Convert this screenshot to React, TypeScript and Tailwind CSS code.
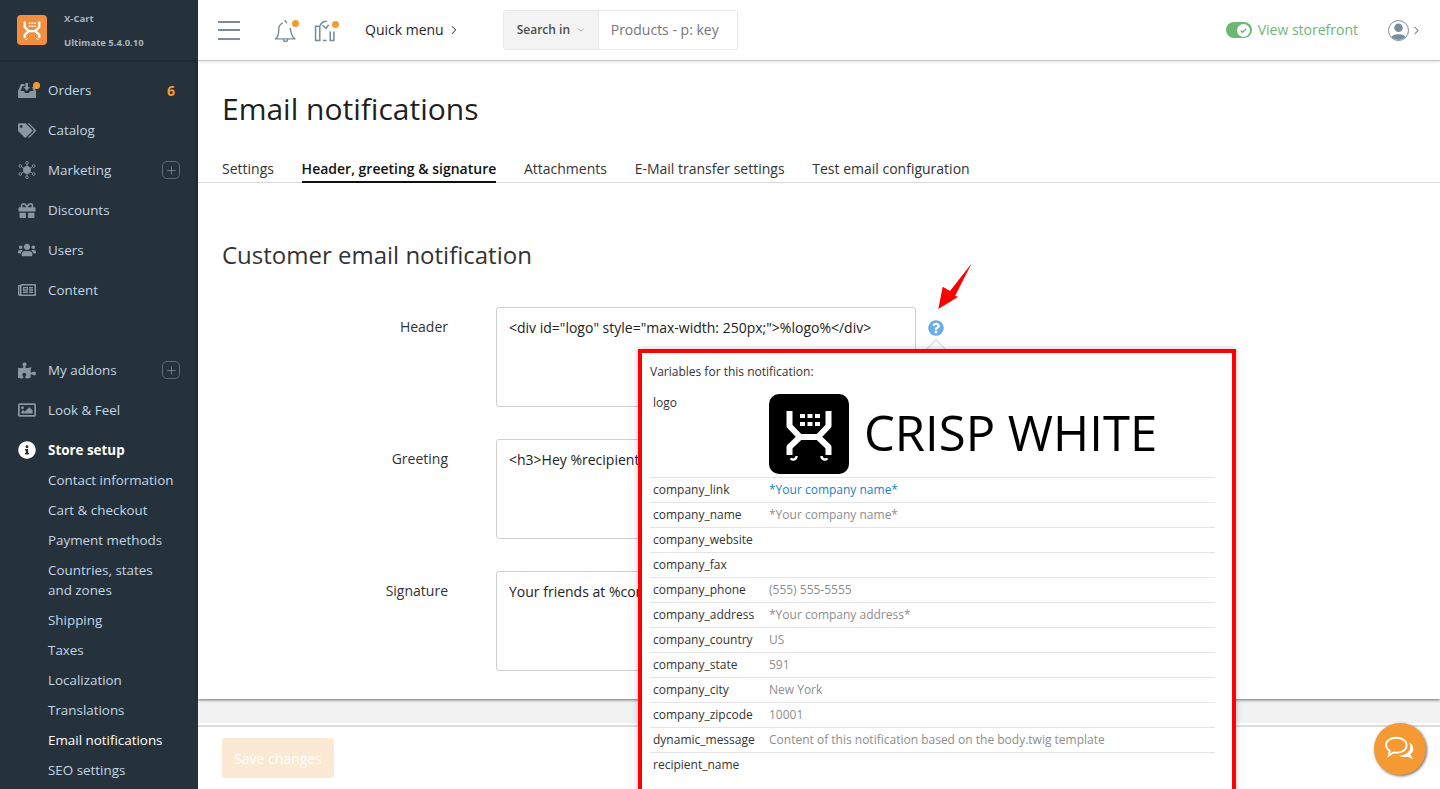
import { ChevronRight, ChevronDown, Plus } from "lucide-react"
import { FaTags, FaGift, FaUsers, FaRegNewspaper, FaPuzzlePiece, FaRegImage, FaInfoCircle, FaQuestionCircle } from "react-icons/fa"

// same cart mark for the sidebar badge and the big "crisp white" logo
function CartMark({ className }: { className?: string }) {
  return (
    <svg viewBox="0 0 80 80" className={className} fill="none" stroke="currentColor" strokeWidth="6">
      <path d="M20.500 17V32L31 43H49L59.500 32V17" strokeLinejoin="round" />
      <path d="M31 43L20.500 53V61M49 43L59.500 53V61" strokeLinejoin="round" />
      <path d="M27.500 62a3.500 3.500 0 0 1-6 2.500M52.500 62a3.500 3.500 0 0 0 6 2.500" strokeWidth="2.500" />
      <path
        d="M31 20h5v4h-5zM38.500 20h5v4h-5zM46 20h5v4h-5zM31 28h5v4h-5zM38.500 28h5v4h-5zM46 28h5v4h-5z"
        fill="currentColor"
        stroke="none"
      />
    </svg>
  )
}

function OrdersIcon() {
  return (
    <svg viewBox="0 0 18 16" className="h-4 w-[18px]" fill="#8b979f">
      <path d="M0 16V9L3 2h3.500v2H4.500L2.500 9H6l1 2h4l1-2h3.500L14 5h2l2 4v7z" />
      <path d="M7.500 1H10v4h2L8.800 9 5.600 5h1.900z" />
    </svg>
  )
}

function HubIcon() {
  return (
    <svg viewBox="0 0 20 20" className="h-[18px] w-[18px]" fill="none" stroke="#8b979f" strokeWidth="1">
      <circle cx="10" cy="10" r="4" fill="#8b979f" />
      <path d="M10 6V3M10 14v3M6.500 8L4 6.500M13.500 8L16 6.500M6.500 12L4 13.500M13.500 12L16 13.500" />
      <circle cx="10" cy="2" r="1.500" />
      <circle cx="10" cy="18" r="1.500" />
      <circle cx="2.500" cy="5.500" r="1.500" />
      <circle cx="17.500" cy="5.500" r="1.500" />
      <circle cx="2.500" cy="14.500" r="1.500" />
      <circle cx="17.500" cy="14.500" r="1.500" />
    </svg>
  )
}

const menu = [
  { label: "Orders", icon: <OrdersIcon />, dot: true, count: "6" },
  { label: "Catalog", icon: <FaTags className="h-[17px] w-[18px] text-[#8b979f]" /> },
  { label: "Marketing", icon: <HubIcon />, plus: true },
  { label: "Discounts", icon: <FaGift className="h-[17px] w-[18px] text-[#8b979f]" /> },
  { label: "Users", icon: <FaUsers className="h-[18px] w-[18px] text-[#8b979f]" /> },
  { label: "Content", icon: <FaRegNewspaper className="h-[18px] w-[18px] text-[#8b979f]" /> },
]

const menu2 = [
  { label: "My addons", icon: <FaPuzzlePiece className="h-[17px] w-[18px] text-[#8b979f]" />, plus: true },
  { label: "Look & Feel", icon: <FaRegImage className="h-[18px] w-[18px] text-[#8b979f]" /> },
]

const subItems = [
  "Contact information",
  "Cart & checkout",
  "Payment methods",
  "Countries, states and zones",
  "Shipping",
  "Taxes",
  "Localization",
  "Translations",
  "Email notifications",
  "SEO settings",
]

const tabs = ["Settings", "Header, greeting & signature", "Attachments", "E-Mail transfer settings", "Test email configuration"]

const fields = [
  { label: "Header", value: '<div id="logo" style="max-width: 250px;">%logo%</div>' },
  { label: "Greeting", value: "<h3>Hey %recipient_name%!</h3>" },
  { label: "Signature", value: "Your friends at %company_name%" },
]

const variables = [
  ["company_link", "*Your company name*"],
  ["company_name", "*Your company name*"],
  ["company_website", ""],
  ["company_fax", ""],
  ["company_phone", "(555) 555-5555"],
  ["company_address", "*Your company address*"],
  ["company_country", "US"],
  ["company_state", "591"],
  ["company_city", "New York"],
  ["company_zipcode", "10001"],
  ["dynamic_message", "Content of this notification based on the body.twig template"],
  ["recipient_name", ""],
]

function MenuRow({ item }: { item: { label: string; icon: React.ReactNode; dot?: boolean; count?: string; plus?: boolean } }) {
  return (
    <div className="flex h-10 items-center px-[18px] text-[13.400px] text-[#c3d5e6]">
      <span className="relative flex w-[30px] items-center">
        {item.icon}
        {item.dot && <span className="absolute left-[15px] top-0 h-[7px] w-[7px] rounded-full bg-[#f59a33]" />}
      </span>
      <span className="flex-1">{item.label}</span>
      {item.count && <span className="mr-[5px] text-[14px] font-bold text-[#f59a33]">{item.count}</span>}
      {item.plus && (
        <span className="flex h-[18px] w-[18px] items-center justify-center rounded-[5px] border border-[#5d6a73]">
          <Plus className="h-[13px] w-[13px] text-[#77838c]" strokeWidth={1.600} />
        </span>
      )}
    </div>
  )
}

function Sidebar() {
  return (
    <aside className="flex h-full w-[198px] shrink-0 flex-col bg-[#25323b]">
      <div className="flex h-[60px] shrink-0 items-center pl-[17px] shadow-[0_1px_3px_rgba(0,0,0,0.35)]">
        <div className="flex h-[30px] w-[30px] items-center justify-center rounded-[4px] bg-[#ef8f3f] text-white">
          <CartMark className="h-[30px] w-[30px]" />
        </div>
        <div className="ml-[17px] flex flex-col gap-[9px] text-[9.500px] font-bold leading-[15px] text-[#aab4bb]">
          <span>X-Cart</span>
          <span>Ultimate 5.4.0.10</span>
        </div>
      </div>
      <nav className="pt-[10px]">
        {menu.map((item) => (
          <MenuRow key={item.label} item={item} />
        ))}
      </nav>
      <nav className="pt-[40px]">
        {menu2.map((item) => (
          <MenuRow key={item.label} item={item} />
        ))}
        <div className="flex h-10 items-center pl-[18px] text-[13.400px] font-bold text-white">
          <span className="w-[30px]">
            <FaInfoCircle className="h-[18px] w-[18px]" />
          </span>
          Store setup
        </div>
      </nav>
      <div className="-mt-[5px] pl-[48px] pr-[20px] text-[13.400px] leading-5 text-[#c3d5e6]">
        {subItems.map((s) => (
          <div key={s} className={s === "Email notifications" ? "py-[5px] text-white" : "py-[5px]"}>
            {s}
          </div>
        ))}
      </div>
    </aside>
  )
}

function TopBar() {
  return (
    <header className="relative z-10 flex h-[61px] shrink-0 items-center border-b border-[#c4c4c4] bg-white pl-5 shadow-[0_1px_3px_rgba(0,0,0,0.12)]">
      <div className="flex w-[22px] flex-col gap-[6.500px]">
        <span className="h-[2px] bg-[#7a8d99]" />
        <span className="h-[2px] bg-[#7a8d99]" />
        <span className="h-[2px] bg-[#7a8d99]" />
      </div>
      <span className="relative ml-[34px] flex">
        <svg viewBox="0 0 22 22" className="h-[23px] w-[23px]" fill="none" stroke="#7a8d99" strokeWidth="1.400">
          <path d="M1.500 19c2.500-2 3-4 3-8.500 0-3 1.500-5.500 3.500-6.500M15.500 9c1 4 1 7.500 4.500 10M1.500 19h18.500M9 19.500a2 2 0 0 0 4 0" strokeLinecap="round" />
          <path d="M10.500 1.500l1.500 2" strokeLinecap="round" />
        </svg>
        <span className="absolute right-[-2px] top-[1px] h-[7px] w-[7px] rounded-full bg-[#f59a33]" />
      </span>
      <span className="relative ml-[17px] flex">
        <svg viewBox="0 0 22 22" className="h-[23px] w-[23px]" fill="none" stroke="#7a8d99" strokeWidth="1.500">
          <path d="M1.500 7h4v13.500h-4zM19 12v8.500h-3.500V12M8.500 20.500h3.500M5.500 7C7 3 10 1.500 12.500 2.500M8 6l3.500 3L14 5.500" />
        </svg>
        <span className="absolute right-[-2px] top-[2px] h-[7px] w-[7px] rounded-full bg-[#f59a33]" />
      </span>
      <span className="ml-[28px] -mt-[1px] flex items-center text-[14px] text-[#1f1f1f]">
        Quick menu
        <ChevronRight className="ml-[3px] h-[14px] w-[14px]" strokeWidth={1.700} />
      </span>
      <div className="ml-[42px] flex h-10 w-[235px] overflow-hidden rounded-[3px] border border-[#e8e8e8] text-[14px]">
        <span className="flex w-[95px] items-center gap-[6px] border-r border-[#e8e8e8] bg-[#f3f3f3] pl-[13px] text-[12px] font-semibold text-[#4d4d4d]">
          Search in
          <ChevronDown className="h-[10px] w-[10px] text-[#9a9a9a]" />
        </span>
        <span className="flex flex-1 items-center pb-[1px] pl-[12px] text-[#767676]">Products - p: key</span>
      </div>
      <div className="ml-auto flex items-center pr-[17px]">
        <span className="flex h-[16px] w-[26px] items-center justify-end rounded-full bg-[#6cb872] pr-[1.500px]">
          <span className="flex h-[13px] w-[13px] items-center justify-center rounded-full bg-white">
            <svg viewBox="0 0 10 10" className="h-[9px] w-[9px]" fill="none" stroke="#6cb872" strokeWidth="1.500">
              <path d="M2 5l2 2 4-4" />
            </svg>
          </span>
        </span>
        <span className="ml-[6px] -mt-[1px] text-[14px] text-[#6cb872]">View storefront</span>
        <span className="ml-[30px] flex h-[21px] w-[21px] items-end justify-center overflow-hidden rounded-full border border-[#7a8d99]">
          <svg viewBox="0 0 20 20" className="h-[19px] w-[19px]" fill="#7a8d99">
            <circle cx="10" cy="7" r="4.500" />
            <path d="M2 20c0-5 4-6 8-6s8 1 8 6z" />
          </svg>
        </span>
        <ChevronRight className="ml-[1px] h-[13px] w-[13px] text-[#444]" strokeWidth={1.700} />
      </div>
    </header>
  )
}

function VariablesPopover() {
  return (
    <div className="absolute left-[440px] top-[288px] z-20 h-[460px] w-[598px] border-[4px] border-[#ff0000] bg-white pl-[8px] pr-[17px] pt-[11px] text-[12px] shadow-[0_0_6px_rgba(0,0,0,0.25)]">
      <div className="leading-[16px] text-[#333]">Variables for this notification:</div>
      <div className="mt-[7px] flex h-[91px] border-b border-[#e4e4e4] pl-[3px]">
        <span className="w-[116px] pt-[8px] leading-[16px] text-[#333]">logo</span>
        <div className="mt-[7px] flex h-[80px] items-center">
          <span className="flex h-[80px] w-[80px] items-center justify-center rounded-[10px] bg-black text-white">
            <CartMark className="h-[80px] w-[80px]" />
          </span>
          <span className="-mt-[3px] ml-[15px] text-[49px] leading-none whitespace-nowrap text-black">CRISP WHITE</span>
        </div>
      </div>
      {variables.map(([name, value]) => (
        <div key={name} className="flex h-[25px] items-center border-b border-[#e4e4e4] pl-[3px] last:border-b-transparent">
          <span className="w-[116px] text-[#333]">{name}</span>
          <span className={name === "company_link" ? "text-[#1c7fc4]" : "text-[#8e8e8e]"}>{value}</span>
        </div>
      ))}
    </div>
  )
}

function HelpMarker() {
  return (
    <>
      <svg viewBox="0 0 38 50" className="absolute left-[738px] top-[201px] z-20 h-[50px] w-[38px]" fill="#ff0000">
        <path d="M2.300 47L6.700 24.700 14 29 35.700 1.300 19 34l3.300.700z" />
      </svg>
      <FaQuestionCircle className="absolute left-[730px] top-[259px] z-20 h-[16px] w-[16px] text-[#6aaee6]" />
      <span className="absolute left-[731px] top-[281px] z-10 h-[14px] w-[14px] rotate-45 border-l border-t border-[#d9d9d9] bg-white" />
    </>
  )
}

export default function App() {
  return (
    <div className="flex h-[789px] w-full overflow-hidden bg-white font-['Open_Sans',sans-serif]">
      <Sidebar />
      <div className="flex h-full min-w-0 flex-1 flex-col">
        <TopBar />
        <main className="relative flex flex-1 flex-col overflow-visible">
          <section className="relative z-[1] h-[638px] shrink-0 bg-white shadow-[0_1px_3px_rgba(0,0,0,0.55)]">
            <h1 className="pl-6 pt-[28px] text-[30px] leading-[40px] text-[#1f1f1f]">Email notifications</h1>
            <div className="mt-[20px] flex h-[34px] gap-[27.700px] border-b border-[#d9d9d9] pl-6 text-[14px] text-[#333]">
              {tabs.map((t) => (
                <span
                  key={t}
                  className={
                    t.startsWith("Header")
                      ? "h-[34px] border-b-[2px] border-[#111] pt-[10px] leading-[19px] font-semibold text-[#111]"
                      : "pt-[10px] leading-[19px]"
                  }
                >
                  {t}
                </span>
              ))}
            </div>
            <h2 className="pl-6 pt-[55px] text-[24px] leading-[34px] text-[#333]">Customer email notification</h2>
            <div className="mt-[35px] flex flex-col gap-8">
              {fields.map((f) => (
                <div key={f.label} className="flex">
                  <label className="w-[250px] pt-[10px] text-right text-[14px] leading-[19px] text-[#333]">{f.label}</label>
                  <div className="ml-[48px] h-[100px] w-[420px] overflow-hidden rounded-[3px] border border-[#cfcfcf] px-3 pt-[10px] text-[14px] leading-[19px] whitespace-nowrap text-[#222]">
                    {f.value}
                  </div>
                </div>
              ))}
            </div>
          </section>
          <div className="h-[24px] shrink-0 bg-[#f2f2f2]" />
          <div className="mt-[2px] flex flex-1 items-start border-t-[2px] border-t-[#dcdcdc] bg-white pl-6 pt-[11px]">
            <button type="button" className="h-10 w-[112px] rounded-[3px] bg-[#fbe9d3] text-[14px] text-white">
              Save changes
            </button>
          </div>
          <HelpMarker />
          <VariablesPopover />
          <div className="absolute left-[1176px] top-[662px] z-30 flex h-[52px] w-[52px] items-center justify-center rounded-full bg-[#f59a33] shadow-[1px_1px_3px_rgba(0,0,0,0.6)]">
            <svg viewBox="0 0 36 30" className="h-[28px] w-[34px]" fill="none" stroke="#fff" strokeWidth="2">
              <path d="M14 3c6 0 11 3 11 8s-5 8-11 8c-1 0-2 0-3-.3L6 22l1-5c-2-1.500-4-3.500-4-6 0-5 5-8 11-8z" />
              <path d="M28 8c3 2 5 5 4 9-.500 2-2 3-3 4l3 5-6-3c-3 1-6 1-9-1 6 0 12-4 12-9 0-2-.5-3-1-5z" fill="#fff" stroke="none" />
            </svg>
          </div>
        </main>
      </div>
    </div>
  )
}
